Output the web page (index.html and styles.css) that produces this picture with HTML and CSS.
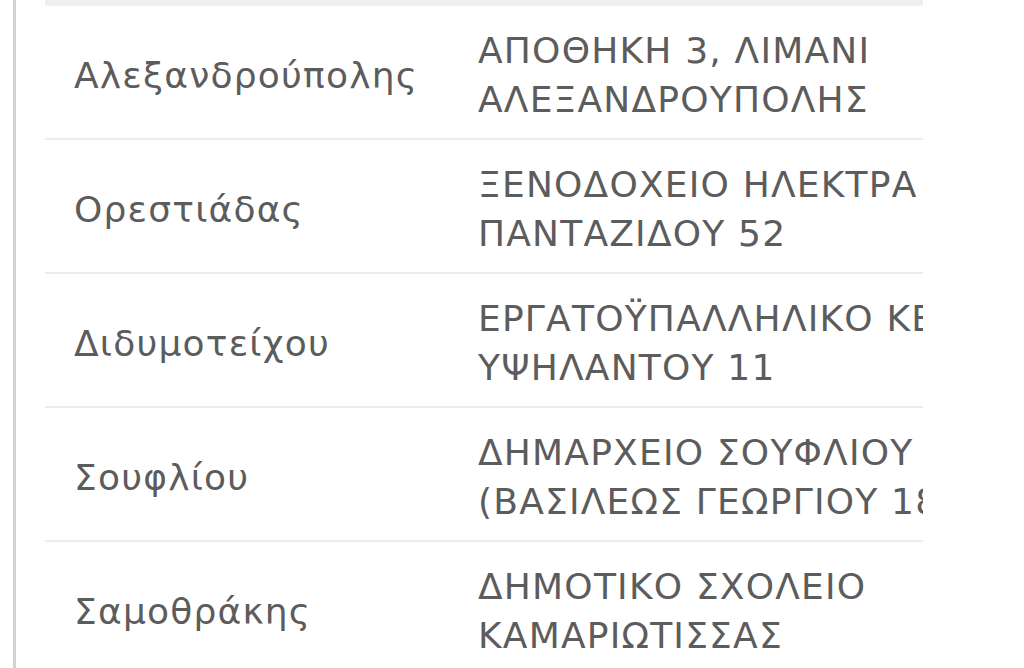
FILE: index.html
```html
<!DOCTYPE html>
<html lang="el">
<head>
<meta charset="utf-8">
<link rel="stylesheet" href="styles.css">
</head>
<body>
<div class="page">
  <div class="frame">
    <table class="stations">
      <colgroup><col class="c-name"><col class="c-addr"></colgroup>
      <thead><tr class="head"><th></th><th></th></tr></thead>
      <tbody>
        <tr><td>Αλεξανδρούπολης</td><td>ΑΠΟΘΗΚΗ 3, ΛΙΜΑΝΙ<br>ΑΛΕΞΑΝΔΡΟΥΠΟΛΗΣ</td></tr>
        <tr><td>Ορεστιάδας</td><td>ΞΕΝΟΔΟΧΕΙΟ ΗΛΕΚΤΡΑ ,<br>ΠΑΝΤΑΖΙΔΟΥ 52</td></tr>
        <tr><td>Διδυμοτείχου</td><td>ΕΡΓΑΤΟΫΠΑΛΛΗΛΙΚΟ ΚΕΝΤΡΟ<br>ΥΨΗΛΑΝΤΟΥ 11</td></tr>
        <tr><td>Σουφλίου</td><td>ΔΗΜΑΡΧΕΙΟ ΣΟΥΦΛΙΟΥ<br>(ΒΑΣΙΛΕΩΣ ΓΕΩΡΓΙΟΥ 186)</td></tr>
        <tr><td>Σαμοθράκης</td><td>ΔΗΜΟΤΙΚΟ ΣΧΟΛΕΙΟ<br>ΚΑΜΑΡΙΩΤΙΣΣΑΣ</td></tr>
      </tbody>
    </table>
  </div>
</div>
</body>
</html>
```
FILE: styles.css
```css
html, body {
  margin: 0;
  padding: 0;
  background: #ffffff;
  height: 100%;
}
body {
  font-family: "DejaVu Sans", "Noto Sans", sans-serif;
  color: #5c5c5c;
  overflow: hidden;
}
.page {
  margin-left: 13px;
  border-left: 3px solid #d2d2d2;
  height: 100%;
  padding-left: 29px;
}
.frame {
  width: 878px;
  overflow: hidden;
}
.stations {
  border-collapse: collapse;
  table-layout: fixed;
  width: 1200px;
}
.c-name { width: 404px; }
.head th {
  height: 6px;
  padding: 0;
  background: #efefef;
}
.stations td {
  height: 126px;
  padding: 6px 0 0 29px;
  border-top: 2px solid #ebebeb;
  vertical-align: middle;
  white-space: nowrap;
  font-size: 36px;
  line-height: 49px;
  letter-spacing: 1.2px;
}
.stations tbody tr:first-child td { border-top: 0; }
```
